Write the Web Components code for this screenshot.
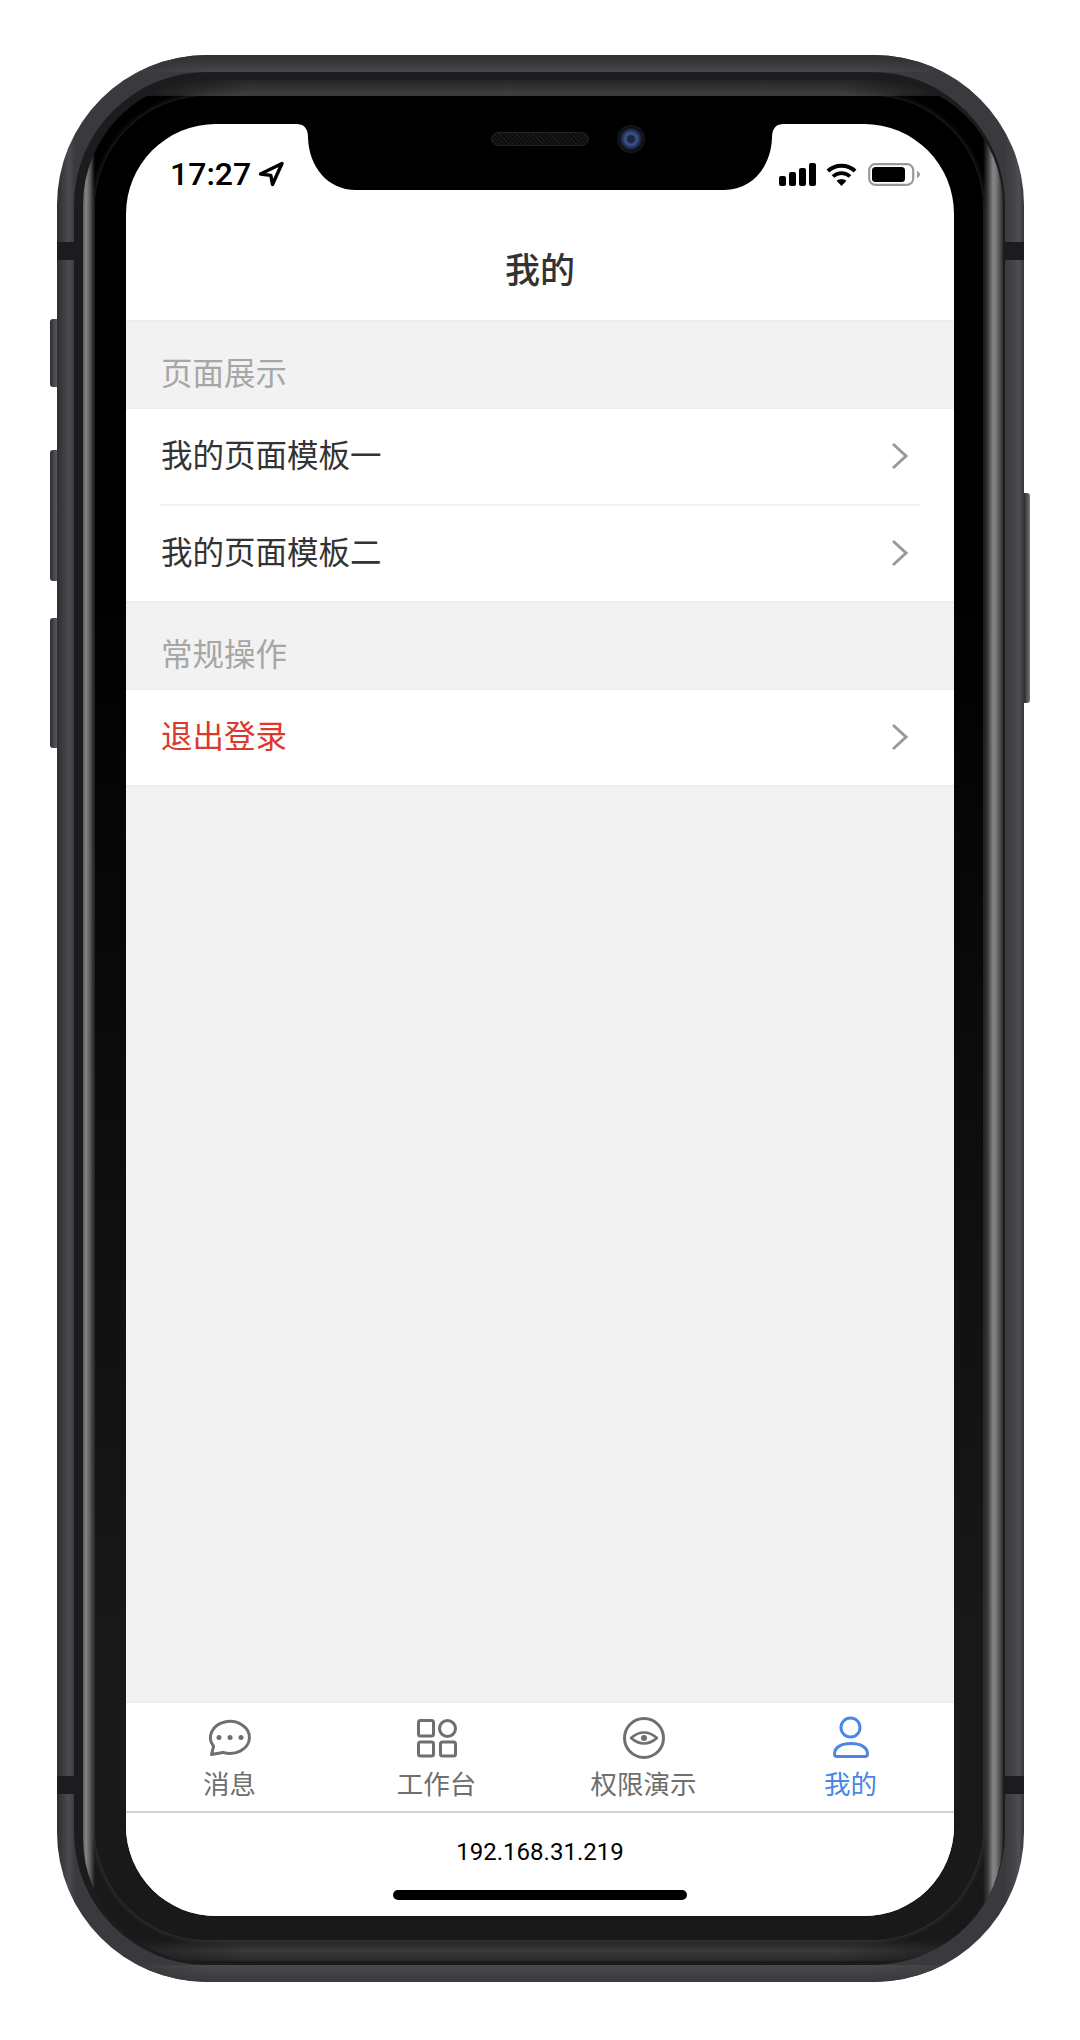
<!DOCTYPE html>
<html lang="zh-CN">
<head>
<meta charset="utf-8">
<title>我的</title>
<style>
  html, body { margin: 0; background: #fff; }
  body { font-family: "Noto Sans CJK SC", "Noto Sans", sans-serif; }
</style>
</head>
<body>
<phone-frame>
  <status-bar time="17:27"></status-bar>
  <nav-header>我的</nav-header>
  <main-area>
    <menu-section heading="页面展示">
      <menu-row>我的页面模板一</menu-row>
      <menu-row divided>我的页面模板二</menu-row>
    </menu-section>
    <menu-section heading="常规操作">
      <menu-row danger>退出登录</menu-row>
    </menu-section>
  </main-area>
  <tab-bar>
    <tab-item label="消息" icon="chat"></tab-item>
    <tab-item label="工作台" icon="grid"></tab-item>
    <tab-item label="权限演示" icon="eye"></tab-item>
    <tab-item label="我的" icon="user" active></tab-item>
  </tab-bar>
  <home-footer>192.168.31.219</home-footer>
</phone-frame>

<script>
class PhoneFrame extends HTMLElement {
  constructor() {
    super();
    this.attachShadow({ mode: 'open' });
    this.shadowRoot.innerHTML = `
      <style>
        :host {
          display: block;
          position: relative;
          width: 967px;
          height: 1927px;
          margin: 55px 0 0 57px;
        }
        div { box-sizing: border-box; }
        .band {
          height: 100%;
          border-radius: 150px;
          background: linear-gradient(90deg, #2e2e31 0, #4b4b50 12px, #3a3a3e 18px, #3a3a3e calc(100% - 19px), #44444a calc(100% - 10px), #4e4e54 calc(100% - 5px), #35353a 100%);
        }
        .band-top {
          height: 100%;
          padding: 17px 19px 17px 17px;
          border-radius: 150px;
          background:
            linear-gradient(90deg, #2e2e31, transparent 16%, transparent 84%, #2e2e31) top / 100% 17px no-repeat,
            linear-gradient(#2e2e31, #47474c) top / 100% 17px no-repeat,
            linear-gradient(90deg, #2e2e31, transparent 16%, transparent 84%, #35353a) bottom / 100% 17px no-repeat,
            linear-gradient(#4a4a4f, #39393d) bottom / 100% 17px no-repeat;
        }
        .dark {
          height: 100%;
          padding: 8px 2px 2px 9px;
          border-radius: 133px;
          background: #1c1c1e;
        }
        .shine {
          height: 100%;
          padding: 16px 20px 23px 12px;
          border-radius: 125px;
          background:
            linear-gradient(90deg, #0a0a0a, transparent 18%, transparent 82%, #0a0a0a) top / 100% 16px no-repeat,
            linear-gradient(#262626, #3b3b3b 80%, #303030) top / 100% 16px no-repeat,
            linear-gradient(90deg, #161616, transparent 18%, transparent 82%, #161616) bottom / 100% 23px no-repeat,
            linear-gradient(#1e1e1e, #3a3a3a 45%, #2c2c2c 85%, #161616) bottom / 100% 23px no-repeat,
            linear-gradient(90deg, #5e5e5e 0, #848484 3px, #5c5c5c 7px, transparent 12px, transparent calc(100% - 20px), #3c3c3c calc(100% - 15px), #858585 calc(100% - 10px), #7a7a7a calc(100% - 7px), #2c2c2c 100%),
            linear-gradient(#000 25%, #191919 85%);
        }
        .bezel {
          height: 100%;
          padding: 28px 29px 24px 31px;
          border-radius: 112px;
          background: linear-gradient(#000 25%, #191919 85%);
          box-shadow: 0 0 5px 1px rgba(100, 100, 100, .4);
        }
        .screen {
          display: flex;
          flex-direction: column;
          height: 100%;
          overflow: hidden;
          border-radius: 90px;
          background: #fff;
          position: relative;
        }
        .notch { position: absolute; left: 170px; top: 0; display: block; }
        .speaker {
          position: absolute;
          left: 365px;
          top: 8px;
          width: 98px;
          height: 14px;
          border-radius: 7px;
          border: 1px solid #222;
          background: repeating-linear-gradient(45deg, #181818 0 1.5px, #0b0b0b 1.5px 3px);
        }
        .camera {
          position: absolute;
          left: 491px;
          top: 1px;
          width: 28px;
          height: 28px;
          border-radius: 50%;
          background: radial-gradient(circle at 50% 50%, #1d2540 0 16%, #3e5590 28%, #28355f 42%, #0d0f16 58%, #191919 72%, #060606 100%);
        }
        .side { position: absolute; background: linear-gradient(90deg, #2c2c30, #5a5a60); }
        .left { left: -7px; width: 7px; border-radius: 3px 0 0 3px; }
        .right {
          left: 967px;
          top: 438px;
          width: 6px;
          height: 210px;
          border-radius: 0 3px 3px 0;
          background: linear-gradient(90deg, #2a2a2a, #777);
        }
        .ant { position: absolute; height: 18px; background: #1c1c20; }
        .ant.l { left: 0; width: 17px; }
        .ant.r { right: 0; width: 19px; }
      </style>
      <i class="side left" style="top:264px;height:68px"></i>
      <i class="side left" style="top:395px;height:131px"></i>
      <i class="side left" style="top:563px;height:130px"></i>
      <i class="side right"></i>
      <div class="band"><div class="band-top"><div class="dark"><div class="shine"><div class="bezel"><div class="screen">
        <slot></slot>
        <svg class="notch" width="488" height="66" viewBox="0 0 488 66" aria-hidden="true">
          <path d="M0 0C8 0 12 4 12 14C13 42 31 66 60 66H428C457 66 475 42 476 14C476 4 480 0 488 0Z" fill="#000"/>
        </svg>
        <div class="speaker"></div>
        <div class="camera"></div>
      </div></div></div></div></div></div>
      <i class="ant l" style="top:187px"></i>
      <i class="ant r" style="top:187px"></i>
      <i class="ant l" style="top:1721px"></i>
      <i class="ant r" style="top:1721px"></i>
    `;
  }
}

class StatusBar extends HTMLElement {
  constructor() {
    super();
    this.attachShadow({ mode: 'open' });
    this.shadowRoot.innerHTML = `
      <style>
        :host {
          display: flex;
          flex: none;
          justify-content: space-between;
          align-items: center;
          box-sizing: border-box;
          height: 88px;
          padding: 12px 34px 0 44px;
          color: #000;
        }
        .left, .right { display: flex; align-items: center; }
        .left { gap: 7px; }
        .time { font: 500 32px/30px Roboto, sans-serif; }
        svg { display: block; }
        .signal { margin-right: 10px; }
        .wifi { margin-right: 11px; }
      </style>
      <div class="left">
        <span class="time"></span>
        <svg width="26" height="26" viewBox="0 0 26 26"><path d="M2.5 13L24 2.5L14.5 23.5L12.8 14.4Z" fill="none" stroke="#000" stroke-width="3.4" stroke-linejoin="round"/></svg>
      </div>
      <div class="right">
        <svg class="signal" width="37" height="23" viewBox="0 0 37 23">
          <rect x="0" y="13" width="7" height="10" rx="2"/>
          <rect x="10" y="9" width="7" height="14" rx="2"/>
          <rect x="20" y="5" width="7" height="18" rx="2"/>
          <rect x="30" y="0" width="7" height="23" rx="2"/>
        </svg>
        <svg class="wifi" width="31" height="23" viewBox="0 0 31 23">
          <path d="M1.9 8A20 20 0 0 1 29.1 8" fill="none" stroke="#000" stroke-width="4"/>
          <path d="M7 13.5A12.5 12.5 0 0 1 24 13.5" fill="none" stroke="#000" stroke-width="3.6"/>
          <path d="M15.5 23L10.5 17.8Q15.5 14.2 20.5 17.8Z"/>
        </svg>
        <svg width="52" height="23" viewBox="0 0 52 23">
          <rect x="1.2" y="1.2" width="44" height="20.6" rx="6" fill="none" stroke="#999" stroke-width="2.2"/>
          <rect x="4" y="4" width="33" height="15" rx="3.5"/>
          <path d="M49 8C51 9 52 10.5 52 11.5C52 12.5 51 14 49 15Z" fill="#999"/>
        </svg>
      </div>
    `;
  }

  connectedCallback() {
    this.shadowRoot.querySelector('.time').textContent = this.getAttribute('time');
  }
}

class NavHeader extends HTMLElement {
  constructor() {
    super();
    this.attachShadow({ mode: 'open' });
    this.shadowRoot.innerHTML = `
      <style>
        :host {
          display: flex;
          flex: none;
          justify-content: center;
          align-items: center;
          box-sizing: border-box;
          height: 108px;
          padding: 4px 0 0;
          font: 500 35px/48px "Noto Sans CJK SC", sans-serif;
          color: #333;
        }
      </style>
      <slot></slot>
    `;
  }
}

class MainArea extends HTMLElement {
  constructor() {
    super();
    this.attachShadow({ mode: 'open' });
    this.shadowRoot.innerHTML = `
      <style>
        :host { display: block; flex: 1; background: #f2f2f2; }
      </style>
      <slot></slot>
    `;
  }
}

class MenuSection extends HTMLElement {
  constructor() {
    super();
    this.attachShadow({ mode: 'open' });
    this.shadowRoot.innerHTML = `
      <style>
        :host { display: block; border-top: 2px solid #ececec; }
        :host(:last-of-type) { border-bottom: 2px solid #ececec; }
        .head {
          padding: 27px 34px 15px 35px;
          border-bottom: 1px solid #ededed;
          font: 400 31.5px/44px "Noto Sans CJK SC", sans-serif;
          color: #a6a6a6;
        }
      </style>
      <div class="head"></div>
      <slot></slot>
    `;
  }

  connectedCallback() {
    this.shadowRoot.querySelector('.head').textContent = this.getAttribute('heading');
  }
}

class MenuRow extends HTMLElement {
  constructor() {
    super();
    this.attachShadow({ mode: 'open' });
    this.shadowRoot.innerHTML = `
      <style>
        :host { display: block; background: #fff; color: #333; }
        :host([danger]) { color: #d93a2d; }
        .rule { display: none; height: 2px; margin: 0 34px; background: #f3f3f3; }
        :host([divided]) .rule { display: block; }
        .row {
          display: flex;
          justify-content: space-between;
          align-items: center;
          height: 95px;
          padding: 0 46px 0 35px;
          font: 400 31.5px/44px "Noto Sans CJK SC", sans-serif;
        }
        .row span { margin-top: -8px; }
        svg { display: block; margin-top: -2px; }
      </style>
      <div class="rule"></div>
      <div class="row">
        <span><slot></slot></span>
        <svg width="17" height="28" viewBox="0 0 17 28"><path d="M2 2L15 14L2 26" fill="none" stroke="#999" stroke-width="3"/></svg>
      </div>
    `;
  }
}

class TabBar extends HTMLElement {
  constructor() {
    super();
    this.attachShadow({ mode: 'open' });
    this.shadowRoot.innerHTML = `
      <style>
        :host {
          display: grid;
          flex: none;
          grid-template-columns: repeat(4, 1fr);
          box-sizing: border-box;
          height: 112px;
          padding-top: 11px;
          border-top: 2px solid #ececec;
          border-bottom: 2px solid #d2d2d2;
          background: #fff;
        }
      </style>
      <slot></slot>
    `;
  }
}

const TAB_ICONS = {
  chat: `<path d="M7.6 32.2A19.5 16 0 1 1 17 38.4L5.5 40.5Z" stroke-linejoin="round"/>
    <circle cx="13" cy="23.5" r="2.5" fill="currentColor" stroke="none"/>
    <circle cx="24" cy="23.5" r="2.5" fill="currentColor" stroke="none"/>
    <circle cx="35" cy="23.5" r="2.5" fill="currentColor" stroke="none"/>`,
  grid: `<rect x="5.5" y="6.5" width="15" height="15.5" rx="2"/>
    <circle cx="34.5" cy="14.5" r="8"/>
    <rect x="5.5" y="28" width="15" height="14" rx="2"/>
    <rect x="27.5" y="28" width="15" height="14" rx="2"/>`,
  eye: `<circle cx="24" cy="24" r="19.5"/>
    <path d="M11 24Q24 13 37 24Q24 35 11 24Z" stroke-linejoin="round" stroke-width="2.6"/>
    <circle cx="24" cy="24" r="3" fill="currentColor" stroke="none"/>`,
  user: `<circle cx="23.5" cy="13.5" r="9.5"/>
    <path d="M7.5 40C7.5 33 15 29.5 24 29.5C33 29.5 40.5 33 40.5 40C40.5 41.8 39.5 42.5 38 42.5H10C8.5 42.5 7.5 41.8 7.5 40Z"/>`
};

class TabItem extends HTMLElement {
  constructor() {
    super();
    this.attachShadow({ mode: 'open' });
    this.shadowRoot.innerHTML = `
      <style>
        :host {
          display: flex;
          flex-direction: column;
          align-items: center;
          gap: 5px;
          color: #6f6f6f;
          font: 400 26.5px/32px "Noto Sans CJK SC", sans-serif;
        }
        :host([active]) { color: #4a86e4; }
        svg { display: block; fill: none; stroke: currentColor; stroke-width: 3; }
      </style>
      <svg width="48" height="48" viewBox="0 0 48 48"></svg>
      <span></span>
    `;
  }

  connectedCallback() {
    this.shadowRoot.querySelector('svg').innerHTML = TAB_ICONS[this.getAttribute('icon')];
    this.shadowRoot.querySelector('span').textContent = this.getAttribute('label');
  }
}

class HomeFooter extends HTMLElement {
  constructor() {
    super();
    this.attachShadow({ mode: 'open' });
    this.shadowRoot.innerHTML = `
      <style>
        :host {
          display: flex;
          flex: none;
          flex-direction: column;
          align-items: center;
          box-sizing: border-box;
          height: 103px;
          padding-top: 24px;
          background: #fff;
          color: #000;
          font: 400 24px/30px Roboto, sans-serif;
        }
        .bar { width: 294px; height: 10px; margin-top: 23px; border-radius: 5px; background: #000; }
      </style>
      <span><slot></slot></span>
      <div class="bar"></div>
    `;
  }
}

customElements.define('phone-frame', PhoneFrame);
customElements.define('status-bar', StatusBar);
customElements.define('nav-header', NavHeader);
customElements.define('main-area', MainArea);
customElements.define('menu-section', MenuSection);
customElements.define('menu-row', MenuRow);
customElements.define('tab-bar', TabBar);
customElements.define('tab-item', TabItem);
customElements.define('home-footer', HomeFooter);
</script>
</body>
</html>
